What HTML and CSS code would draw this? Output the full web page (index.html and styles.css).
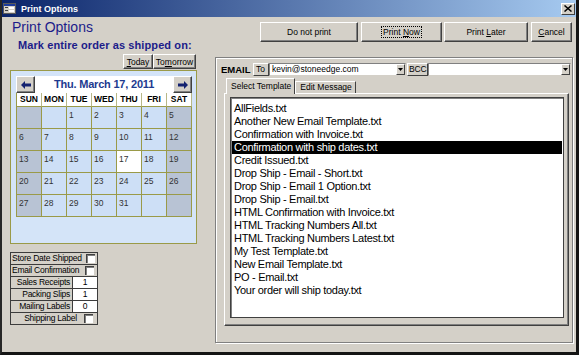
FILE: index.html
```html
<!DOCTYPE html>
<html lang="en">
<head>
    <meta charset="UTF-8">
    <meta name="viewport" content="width=device-width, initial-scale=1.0">
    <title>Print Options</title>
    <link rel="stylesheet" href="styles.css">
</head>
<body>
<div class="window">
    <!-- Title bar -->
    <div class="titlebar">
        <svg class="app-icon" width="13" height="11" viewBox="0 0 13 11">
            <rect x="0.5" y="0.5" width="12" height="10" fill="#d4d0c8" stroke="#5a5a5a"/>
            <rect x="1" y="1" width="11" height="2" fill="#1c3c9c"/>
            <rect x="2" y="4" width="3" height="1" fill="#404040"/>
            <rect x="6" y="4" width="5" height="2" fill="#ffffff"/>
            <rect x="2" y="7" width="3" height="1" fill="#404040"/>
            <rect x="6" y="7" width="5" height="2" fill="#ffffff"/>
        </svg>
        <span class="title">Print Options</span>
        <span class="close-btn">
            <svg width="8" height="7" viewBox="0 0 8 7">
                <path d="M0.5 0.5 L7.5 6.5 M7.5 0.5 L0.5 6.5" stroke="#000" stroke-width="1.5"/>
            </svg>
        </span>
    </div>

    <div class="main">
        <!-- Left side: ship date -->
        <div class="left-col">
            <h1>Print Options</h1>
            <div class="mark">Mark entire order as shipped on:</div>
            <div class="quick-dates">
                <button class="btn btn-today"><span><u>T</u>oday</span></button>
                <button class="btn btn-tomorrow"><span>To<u>m</u>orrow</span></button>
            </div>

            <div class="calendar">
                <div class="cal-head">
                    <button class="btn cal-arrow">
                        <svg width="10" height="8" viewBox="0 0 10 8"><path d="M0 4 L4 0 L4 2.5 L10 2.5 L10 5.5 L4 5.5 L4 8 Z" fill="#142270"/></svg>
                    </button>
                    <div class="cal-title">Thu. March 17, 2011</div>
                    <button class="btn cal-arrow">
                        <svg width="10" height="8" viewBox="0 0 10 8"><path d="M10 4 L6 0 L6 2.5 L0 2.5 L0 5.5 L6 5.5 L6 8 Z" fill="#142270"/></svg>
                    </button>
                </div>
                <div class="cal-grid">
                    <div class="dow">SUN</div><div class="dow">MON</div><div class="dow">TUE</div><div class="dow">WED</div><div class="dow">THU</div><div class="dow">FRI</div><div class="dow">SAT</div>

                    <div class="day wkend"></div><div class="day"></div><div class="day">1</div><div class="day">2</div><div class="day">3</div><div class="day">4</div><div class="day wkend">5</div>
                    <div class="day wkend">6</div><div class="day">7</div><div class="day">8</div><div class="day">9</div><div class="day">10</div><div class="day">11</div><div class="day wkend">12</div>
                    <div class="day wkend">13</div><div class="day">14</div><div class="day">15</div><div class="day">16</div><div class="day today">17</div><div class="day">18</div><div class="day wkend">19</div>
                    <div class="day wkend">20</div><div class="day">21</div><div class="day">22</div><div class="day">23</div><div class="day">24</div><div class="day">25</div><div class="day wkend">26</div>
                    <div class="day wkend">27</div><div class="day">28</div><div class="day">29</div><div class="day">30</div><div class="day">31</div><div class="day"></div><div class="day wkend"></div>
                </div>
            </div>

            <!-- Print counts and flags -->
            <div class="options">
                <div class="opt-row"><span class="opt-label">Store Date Shipped</span><span class="check"></span></div>
                <div class="opt-row"><span class="opt-label">Email Confirmation</span><span class="check check-b"></span></div>
                <div class="opt-row count"><span class="opt-label">Sales Receipts</span><span class="opt-value">1</span></div>
                <div class="opt-row count"><span class="opt-label">Packing Slips</span><span class="opt-value">1</span></div>
                <div class="opt-row count"><span class="opt-label">Mailing Labels</span><span class="opt-value">0</span></div>
                <div class="opt-row ship"><span class="opt-label">Shipping Label</span><span class="check check-c"></span></div>
            </div>
        </div>

        <!-- Right side: print buttons and email -->
        <div class="right-col">
            <div class="print-buttons">
                <button class="btn btn-noprint"><span>Do not print</span></button>
                <button class="btn btn-now"><span class="focus">Print <u>N</u>ow</span></button>
                <button class="btn btn-later"><span>Print <u>L</u>ater</span></button>
                <button class="btn btn-cancel"><span><u>C</u>ancel</span></button>
            </div>

            <div class="email-frame">
                <div class="email-row">
                    <span class="email-label">EMAIL</span>
                    <span class="field-btn btn-to">To</span>
                    <div class="combo combo-to">
                        <span class="combo-text">kevin@stoneedge.com</span>
                        <span class="combo-arrow"><svg width="5" height="3" viewBox="0 0 5 3"><path d="M0 0 H5 L2.5 3 Z" fill="#000"/></svg></span>
                    </div>
                    <span class="field-btn btn-bcc">BCC</span>
                    <div class="combo combo-bcc">
                        <span class="combo-text"></span>
                        <span class="combo-arrow"><svg width="5" height="3" viewBox="0 0 5 3"><path d="M0 0 H5 L2.5 3 Z" fill="#000"/></svg></span>
                    </div>
                </div>

                <div class="tab-area">
                    <div class="tabs">
                        <span class="tab active">Select Template</span>
                        <span class="tab">Edit Message</span>
                    </div>
                    <div class="tab-panel">
                        <ul class="template-list">
                            <li>AllFields.txt</li>
                            <li>Another New Email Template.txt</li>
                            <li>Confirmation with Invoice.txt</li>
                            <li class="selected">Confirmation with ship dates.txt</li>
                            <li>Credit Issued.txt</li>
                            <li>Drop Ship - Email - Short.txt</li>
                            <li>Drop Ship - Email 1 Option.txt</li>
                            <li>Drop Ship - Email.txt</li>
                            <li>HTML Confirmation with Invoice.txt</li>
                            <li>HTML Tracking Numbers All.txt</li>
                            <li>HTML Tracking Numbers Latest.txt</li>
                            <li>My Test Template.txt</li>
                            <li>New Email Template.txt</li>
                            <li>PO - Email.txt</li>
                            <li>Your order will ship today.txt</li>
                        </ul>
                    </div>
                </div>
            </div>
        </div>
    </div>
</div>
</body>
</html>
```

FILE: styles.css
```css
/* Global */
body {
    margin: 0;
    font-family: "Liberation Sans", Arial, sans-serif;
    font-size: 8.5px;
    color: #000;
    background: #d4d0c8;
}

.window {
    width: 579px;
    height: 355px;
    box-sizing: border-box;
    background: #d4d0c8;
    border-left: 2px solid #262626;
    border-right: 3px solid #141414;
    border-bottom: 3px solid #141414;
    display: flex;
    flex-direction: column;
}

/* Title bar */
.titlebar {
    height: 17px;
    flex-shrink: 0;
    display: flex;
    align-items: center;
    background: linear-gradient(to right, #0a246a, #a6caf0);
}

.app-icon {
    margin-left: 1px;
}

.title {
    margin-left: 5px;
    color: #fff;
    font-weight: bold;
    font-size: 9px;
    flex: 1;
}

.close-btn {
    width: 14px;
    height: 12px;
    margin-right: 1px;
    box-sizing: border-box;
    background: #d4d0c8;
    border: 1px solid;
    border-color: #fff #404040 #404040 #fff;
    display: flex;
    align-items: center;
    justify-content: center;
}

.main {
    flex: 1;
    display: flex;
}

/* Buttons */
.btn {
    font-family: inherit;
    font-size: 8.5px;
    color: #000;
    background: #d4d0c8;
    border: 1px solid;
    border-color: #fff #404040 #404040 #fff;
    box-shadow: inset -1px -1px 0 #808080;
    padding: 0;
    margin: 0;
    box-sizing: border-box;
    display: flex;
    align-items: center;
    justify-content: center;
    white-space: nowrap;
}

/* Left column */
.left-col {
    width: 198px;
    display: flex;
    flex-direction: column;
}

h1 {
    margin: 2px 0 0 10px;
    font-size: 14px;
    font-weight: normal;
    line-height: 16px;
    color: #1c1c8a;
}

.mark {
    margin: 4px 0 0 16px;
    font-size: 11px;
    font-weight: bold;
    letter-spacing: 0.1px;
    line-height: 13px;
    color: #1c1c8a;
}

.quick-dates {
    display: flex;
    justify-content: flex-end;
    margin-top: 2px;
    padding-right: 4px;
}

.quick-dates .btn {
    height: 15px;
}

.btn-today {
    width: 30px;
}

.btn-tomorrow {
    width: 43px;
}

/* Calendar */
.calendar {
    margin: 1px 0 0 8px;
    width: 187px;
    height: 174px;
    box-sizing: border-box;
    border: 1px solid #9a9a48;
    background: #d4e4f8;
    padding: 5px 0 0 5px;
}

.cal-head {
    display: flex;
    width: 176px;
    height: 17px;
}

.cal-arrow {
    width: 19px;
    height: 17px;
}

.cal-title {
    flex: 1;
    background: #fff;
    color: #1d3a8f;
    font-size: 11px;
    font-weight: bold;
    letter-spacing: -0.2px;
    line-height: 17px;
    text-align: center;
}

.cal-grid {
    display: grid;
    grid-template-columns: repeat(7, 25px);
    grid-template-rows: 14px repeat(5, 22px);
    border-left: 1px solid #9a9a48;
    width: 176px;
}

.dow {
    background: #fff;
    border-right: 1px solid #b8b888;
    border-bottom: 1px solid #9a9a48;
    font-weight: bold;
    font-size: 8.5px;
    line-height: 13px;
    text-align: center;
}

.day {
    background: #cddff6;
    border-right: 1px solid #9a9a48;
    border-bottom: 1px solid #9a9a48;
    font-size: 8.5px;
    color: #333;
    padding: 3px 0 0 2px;
}

.day.wkend {
    background: #b8c3d4;
}

.day.today {
    background: #fff;
}

/* Option checks and counts */
.options {
    margin: 8px 0 0 8px;
    width: 88px;
    box-sizing: border-box;
    border: 1px solid #3c3c3c;
}

.opt-row {
    height: 11px;
    display: flex;
    align-items: center;
    border-top: 1px solid #3c3c3c;
    font-size: 8.5px;
    letter-spacing: -0.25px;
    line-height: 11px;
}

.opt-row:first-child {
    border-top: none;
}

.opt-label {
    flex: 1;
    padding-left: 1px;
    white-space: nowrap;
}

.check {
    width: 9px;
    height: 9px;
    box-sizing: border-box;
    background: #fff;
    border-top: 1px solid #404040;
    border-left: 1px solid #404040;
    box-shadow: inset 1px 1px 0 #808080;
    margin-right: 2px;
}

.check-b {
    margin-right: 3px;
}

.count .opt-label {
    text-align: right;
    padding-right: 2px;
    border-right: 1px solid #3c3c3c;
}

.opt-value {
    width: 24px;
    height: 11px;
    background: #fff;
    text-align: center;
}

.ship .opt-label {
    text-align: center;
    padding-left: 6px;
}

.ship .check {
    margin-right: 4px;
}

/* Right column */
.right-col {
    flex: 1;
    display: flex;
    flex-direction: column;
}

.print-buttons {
    display: flex;
    margin: 5px 0 0 60px;
}

.print-buttons .btn {
    height: 20px;
    margin-right: 3px;
}

.btn-noprint {
    width: 98px;
}

.print-buttons .btn-now {
    width: 81px;
    margin-right: 2px;
}

.btn-later {
    width: 84px;
}

.btn-cancel {
    width: 41px;
}

.focus {
    outline: 1px dotted #000;
    padding: 0 1px;
}

/* Email frame */
.email-frame {
    margin: 15px 0 0 15px;
    width: 358px;
    height: 286px;
    box-sizing: border-box;
    border: 1px solid #808080;
    box-shadow: 1px 1px 0 #fff, inset 1px 1px 0 #fff;
    padding: 5px 0 0 5px;
}

.email-row {
    display: flex;
    align-items: center;
    height: 13px;
}

.email-label {
    width: 32px;
    font-weight: bold;
    font-size: 9.5px;
}

.field-btn {
    height: 13px;
    box-sizing: border-box;
    border: 1px solid;
    border-color: #fff #404040 #404040 #fff;
    line-height: 11px;
    padding-left: 2px;
}

.btn-to {
    width: 16px;
}

.btn-bcc {
    width: 21px;
    margin-left: 1px;
    padding-left: 1px;
    letter-spacing: -0.2px;
}

.combo {
    height: 13px;
    box-sizing: border-box;
    background: #fff;
    border: 1px solid;
    border-color: #808080 #d4d0c8 #d4d0c8 #808080;
    display: flex;
}

.combo-to {
    width: 137px;
}

.combo-bcc {
    width: 143px;
}

.combo-text {
    flex: 1;
    padding-left: 2px;
    line-height: 11px;
}

.combo-arrow {
    width: 9px;
    box-sizing: border-box;
    background: #d4d0c8;
    border: 1px solid;
    border-color: #fff #404040 #404040 #fff;
    display: flex;
    align-items: center;
    justify-content: center;
}

/* Tabs */
.tab-area {
    margin: 2px 0 0 3px;
}

.tabs {
    display: flex;
    align-items: flex-end;
    height: 15px;
    margin-left: 2px;
}

.tab {
    height: 12px;
    box-sizing: border-box;
    border: 1px solid;
    border-color: #fff #404040 transparent #fff;
    border-bottom: none;
    padding: 0 3px 0 4px;
    line-height: 11px;
}

.tab.active {
    position: relative;
    height: 16px;
    margin-bottom: -1px;
    background: #d4d0c8;
    line-height: 14px;
    z-index: 1;
}

.tab-panel {
    width: 345px;
    height: 233px;
    box-sizing: border-box;
    border: 1px solid;
    border-color: #fff #404040 #404040 #fff;
    box-shadow: inset -1px -1px 0 #808080;
    padding: 3px 0 0 5px;
}

.template-list {
    list-style: none;
    margin: 0;
    width: 334px;
    height: 221px;
    box-sizing: border-box;
    background: #fff;
    border: 1px solid #404040;
    box-shadow: inset 1px 1px 0 #808080;
    padding: 4px 0 0 0;
    font-size: 11px;
    letter-spacing: -0.3px;
}

.template-list li {
    height: 13px;
    line-height: 13px;
    margin: 0 1px;
    padding-left: 2px;
    white-space: nowrap;
}

.template-list li.selected {
    background: #000;
    color: #fff;
}
```
